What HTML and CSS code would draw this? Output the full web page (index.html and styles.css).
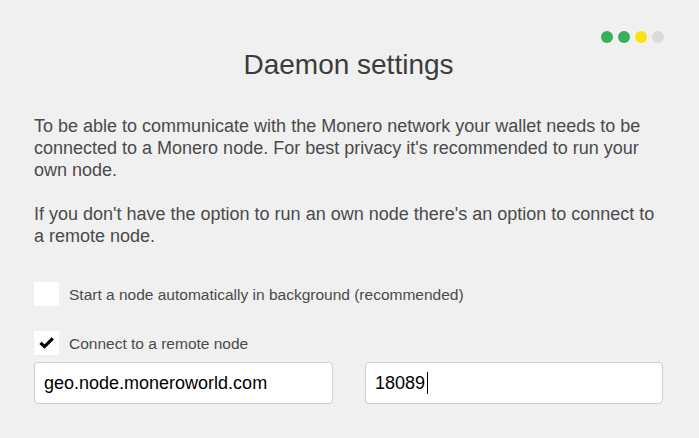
FILE: index.html
```html
<!DOCTYPE html>
<html lang="en">

<head>
  <meta charset="UTF-8">
  <title>Daemon settings</title>
  <link rel="stylesheet" href="styles.css">
</head>

<body>
  <div class="page">
    <!-- wizard progress -->
    <div class="steps">
      <i class="done"></i>
      <i class="done"></i>
      <i class="current"></i>
      <i></i>
    </div>

    <h1 class="title">Daemon settings</h1>

    <div class="intro">
      <p>To be able to communicate with the Monero network your wallet needs to be connected to a Monero node. For best privacy it's recommended to run your own node.</p>
      <p>If you don't have the option to run an own node there's an option to connect to a remote node.</p>
    </div>

    <div class="option first">
      <span class="box"></span>
      <span class="label">Start a node automatically in background (recommended)</span>
    </div>

    <div class="option second">
      <span class="box">
        <svg width="25" height="24" viewBox="0 0 25 24">
          <polyline points="6.5,11.8 10.5,15.6 18.8,7.4" fill="none" stroke="#000" stroke-width="3.2" />
        </svg>
      </span>
      <span class="label">Connect to a remote node</span>
    </div>

    <div class="remote">
      <div class="field">geo.node.moneroworld.com</div>
      <div class="field">18089<span class="caret"></span></div>
    </div>
  </div>
</body>

</html>
```

FILE: styles.css
```css
* {
  margin: 0;
  padding: 0;
  box-sizing: border-box;
}

body {
  background-color: #f0f0f0;
  font-family: "Liberation Sans", Arial, sans-serif;
  color: #4a4a4a;
}

.page {
  width: 699px;
  height: 438px;
  padding: 31px 36px 0 34px;
}

.steps {
  display: flex;
  justify-content: flex-end;
  gap: 5px;
  margin-right: -1px;
}

.steps i {
  display: block;
  width: 12px;
  height: 12px;
  border-radius: 50%;
  background-color: #dbdbdb;
}

.steps i.done {
  background-color: #36b05b;
}

.steps i.current {
  background-color: #ffe00a;
}

.title {
  margin-top: 6px;
  font-size: 28px;
  font-weight: normal;
  line-height: 32px;
  text-align: center;
  color: #3c3c3c;
}

.intro {
  width: 626px;
  margin-top: 34px;
  font-size: 18px;
  line-height: 22px;
}

.intro p + p {
  margin-top: 22px;
}

.option {
  display: flex;
  align-items: center;
  height: 24px;
}

.option.first {
  margin-top: 35px;
}

.option.second {
  margin-top: 25px;
}

.option .box {
  display: block;
  width: 25px;
  height: 24px;
  background-color: #fff;
}

.option .box svg {
  display: block;
}

.option .label {
  margin-left: 10px;
  padding-top: 2px;
  font-size: 15.5px;
}

.remote {
  display: grid;
  grid-template-columns: 299px 298px;
  gap: 32px;
  margin-top: 7px;
}

.field {
  display: flex;
  align-items: center;
  height: 42px;
  padding-left: 9px;
  border: 1px solid #cfcfcf;
  border-radius: 4px;
  background-color: #fff;
  font-size: 18px;
  color: #000;
}

.caret {
  display: block;
  width: 1px;
  height: 22px;
  margin-left: 2px;
  background-color: #000;
}
```
